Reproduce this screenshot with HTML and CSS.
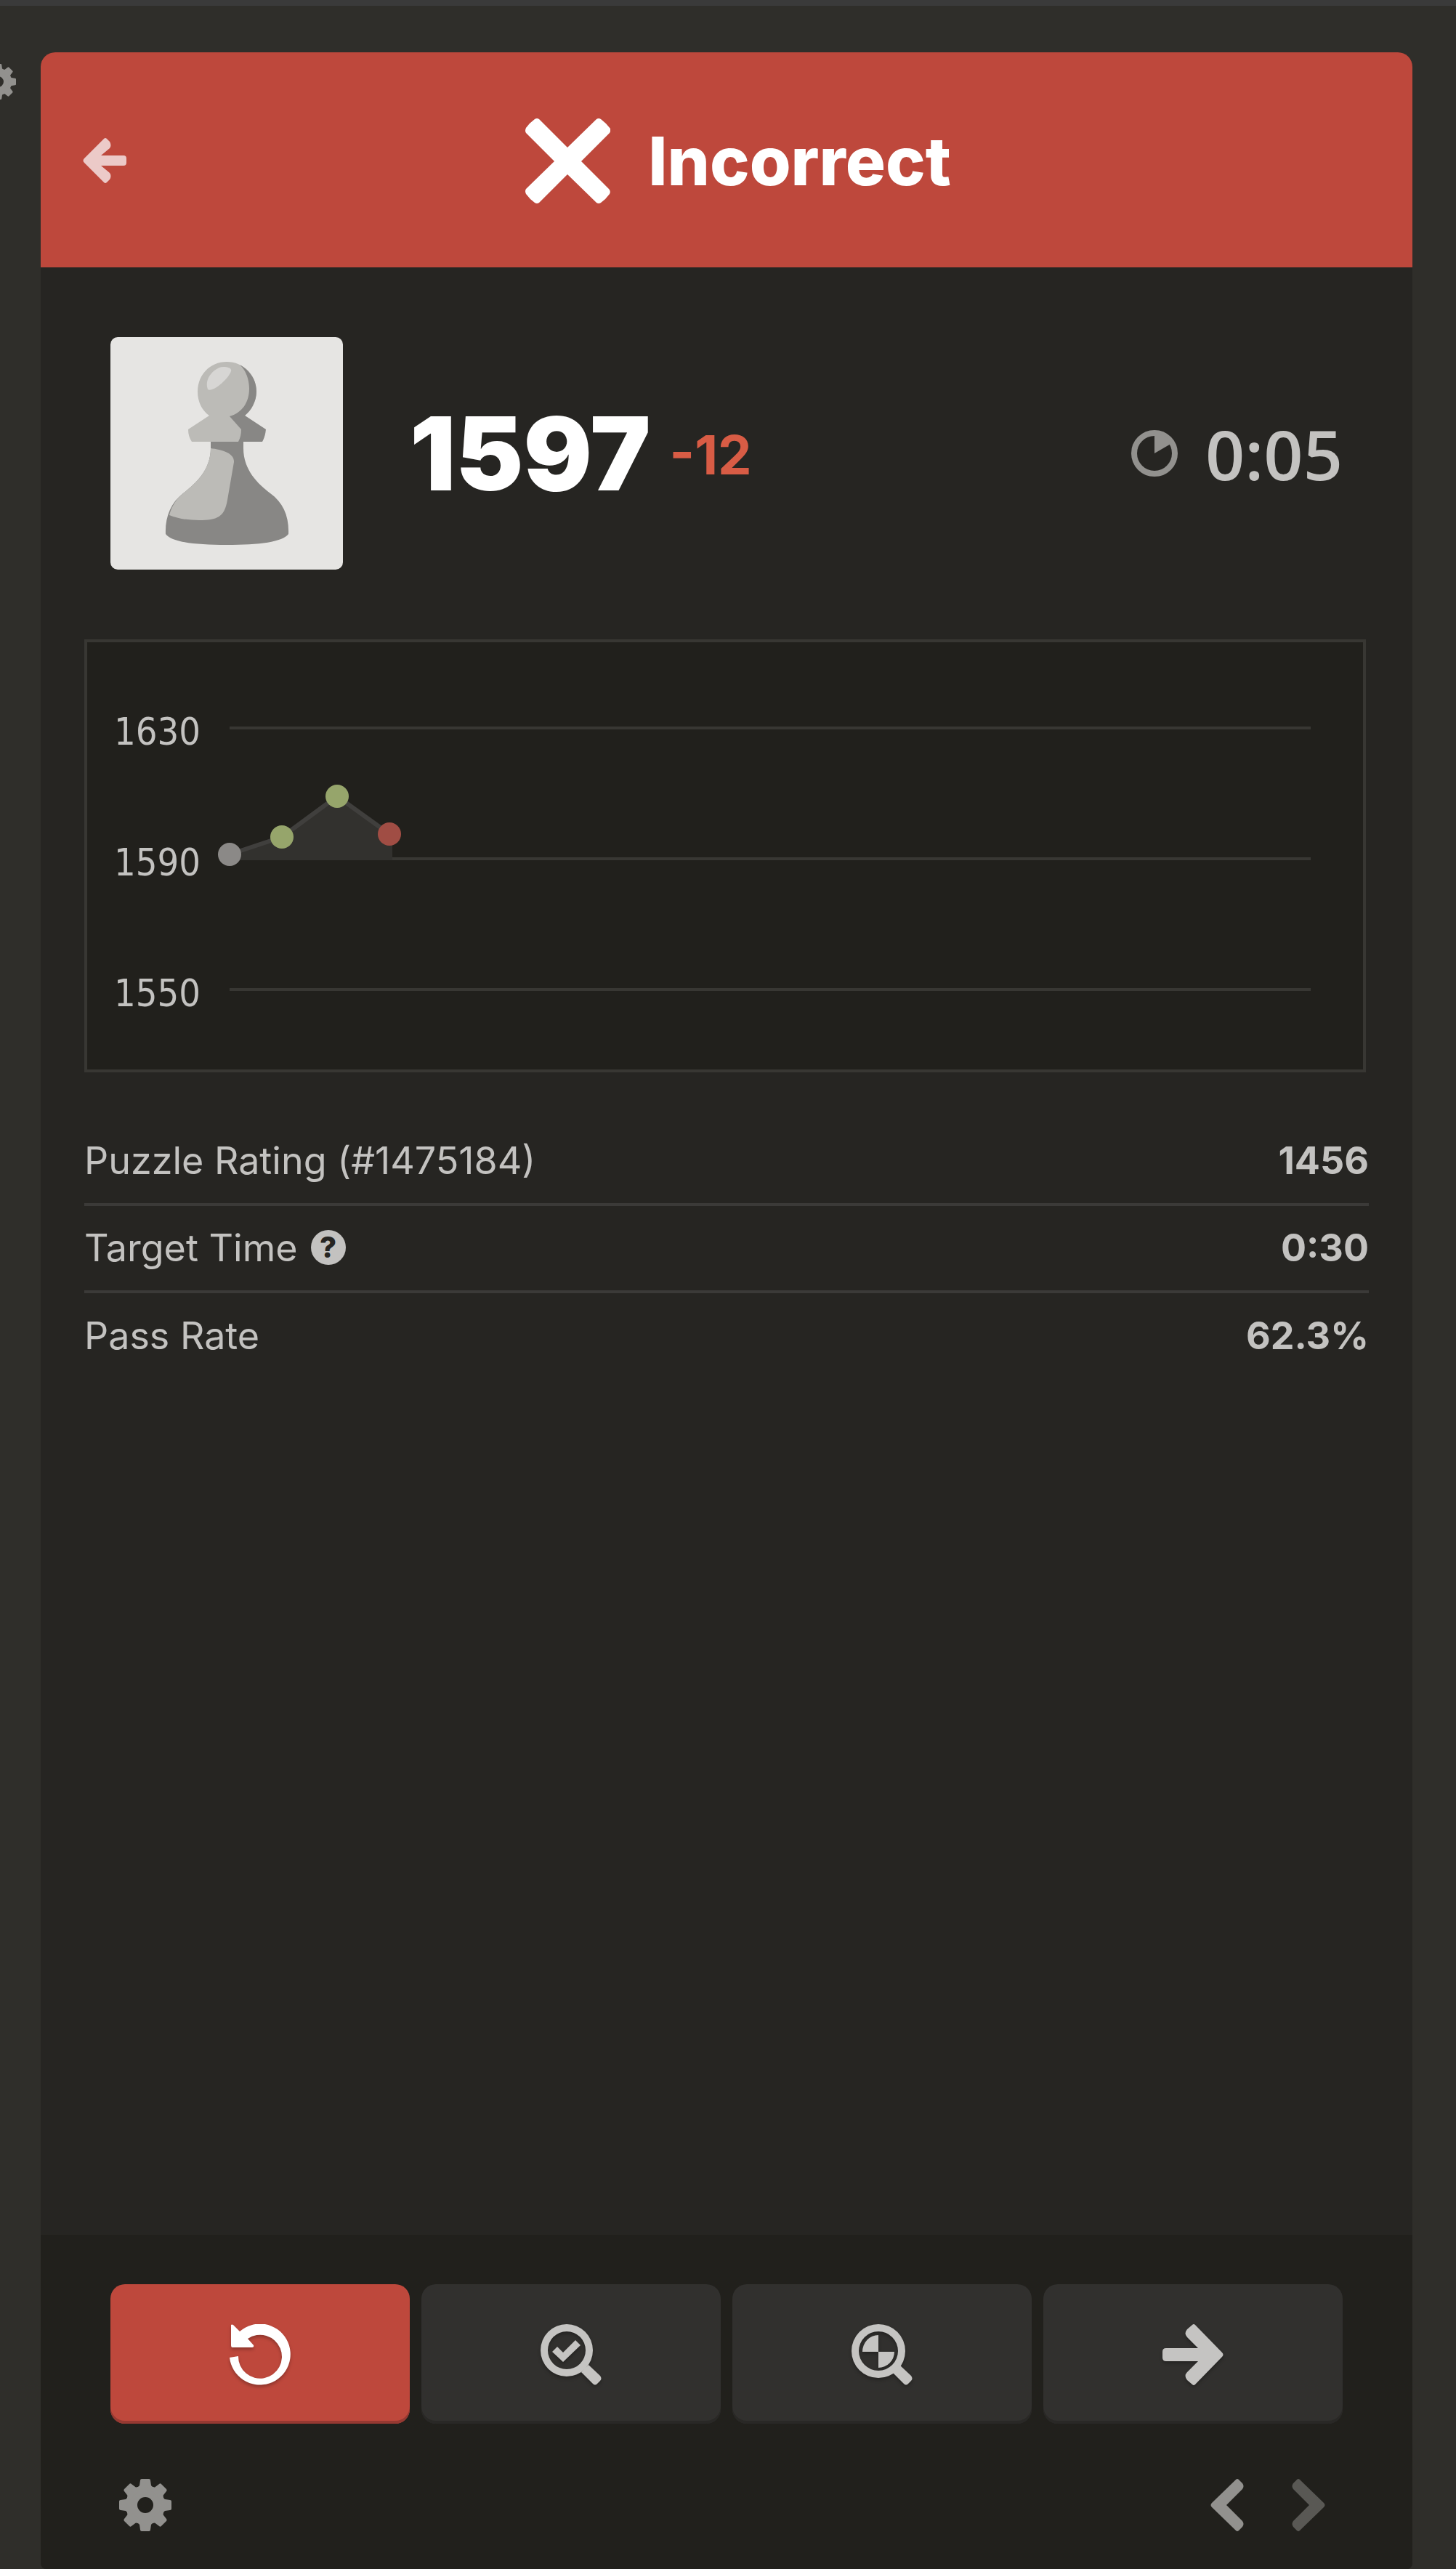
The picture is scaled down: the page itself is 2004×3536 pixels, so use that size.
FILE: index.html
```html
<!DOCTYPE html>
<html lang="en">
<head>
<meta charset="utf-8">
<meta name="viewport" content="width=device-width, initial-scale=1">
<title>Puzzles</title>
<link rel="stylesheet" href="styles.css">
</head>
<body>
<svg class="sprite" aria-hidden="true">
  <symbol id="gear" viewBox="0 0 72 72">
    <circle cx="36" cy="36" r="19" fill="none" stroke="currentColor" stroke-width="16"/>
    <g id="teeth"><path id="tooth" d="M31 0H41Q43 0 43 2L44 9Q45 11 48 12L45 16H27L24 12Q27 11 28 9L29 2Q29 0 31 0Z"/><use href="#tooth" transform="rotate(90 36 36)"/><use href="#tooth" transform="rotate(180 36 36)"/><use href="#tooth" transform="rotate(270 36 36)"/></g>
    <use href="#teeth" transform="rotate(45 36 36)"/>
  </symbol>
  <symbol id="chevron" viewBox="0 0 46 72">
    <path d="M35 1Q37 -1 39 1L44 6Q47 10 44 14L22 36L44 58Q47 62 44 66L39 71Q37 73 35 71L2 39Q-1 36 2 33Z"/>
  </symbol>
  <symbol id="arrow" viewBox="0 0 84 84">
    <path d="M41 1L34 7Q29 13 34 18L49 33H5Q0 33 0 38V46Q0 51 5 51H49L34 66Q29 71 34 77L41 83Q43 85 45 83L82 45Q85 42 82 39L45 1Q43 -1 41 1Z"/>
  </symbol>
</svg>

<div class="topline"></div>
<div class="board-settings">
  <button class="icon-button" aria-label="Board settings"><svg class="gear-small"><use href="#gear"/></svg></button>
</div>

<main class="panel">
  <header class="result">
    <button class="icon-button back" aria-label="Back">
      <svg width="60" height="62" viewBox="0 0 60 62"><path d="M29 1L2 28Q-1 31 2 34L29 61Q31 63 33 61L37 57Q40 52 37 48L25 38H56Q60 38 60 34V28Q60 24 56 24H25L37 14Q40 10 37 5L33 1Q31 -1 29 1Z"/></svg>
    </button>
    <h1 class="result-title">
      <svg width="117" height="117" viewBox="0 0 117 117"><path d="M13 1Q16 -1 19 1L58 40L98 1Q101 -1 104 1Q112 7 117 14Q118 17 116 20L77 59L115 97Q118 100 116 104Q111 111 104 116Q101 118 98 116L58 77L19 116Q16 118 13 116Q6 111 1 104Q-1 100 1 97L40 59L1 20Q-1 17 1 13Q6 6 13 1Z"/></svg>
      <span>Incorrect</span>
    </h1>
  </header>

  <section class="score">
    <svg class="avatar" viewBox="0 0 320 320" role="img" aria-label="Pawn">
      <path fill="#bcbbb7" d="M160 34C183 34 201 52 201 75C201 88 194 101 185 108L213 127Q213 137 209 144H112Q107 137 107 127L136 108C126 101 120 89 120 75C120 52 137 34 160 34Z"/>
      <path fill="#888785" d="M178 38C192 46 201 59 201 75C201 88 194 101 185 108L214 127Q213 137 209 144H176Q180 137 180 127L164 109C182 104 191 89 191 71C191 58 186 45 178 38Z"/>
      <path fill="#888785" d="M138 144H183V153C183 183 203 202 220 215C238 228 246 247 245 271C237 282 205 286 160 286C115 286 84 282 76 271C75 248 83 228 100 215C117 202 138 183 138 153Z"/>
      <path fill="#bcbbb7" d="M138 153C154 155 171 160 170 172L161 224C157 248 147 252 122 252Q98 252 81 245C84 234 90 223 100 215C117 202 138 183 138 153Z"/>
      <path fill="#d7d6d4" d="M134 72C128 56 145 41 155 41C165 41 169 44 164 51C159 60 141 76 134 72Z"/>
    </svg>
    <strong class="rating">1597</strong>
    <span class="change">-12</span>
    <div class="timer">
      <svg width="64" height="64" viewBox="0 0 64 64"><circle cx="32" cy="32" r="28" fill="none" stroke="#92918e" stroke-width="8"/><path fill="#92918e" d="M32 32V5A27 27 0 0 1 56 18Z"/></svg>
      <time>0:05</time>
    </div>
  </section>

  <section class="details">
    <svg class="chart" viewBox="0 0 1764 596" role="img" aria-label="Rating history">
      <g stroke="#383733" stroke-width="4"><path d="M200 122H1688M200 302H1688M200 482H1688"/></g>
      <g class="chart-labels"><text x="41" y="145">1630</text><text x="41" y="325">1590</text><text x="41" y="505">1550</text></g>
      <path fill="#32312e" d="M200 296L272 272L348 216L420 268L424 270V304H200Z"/>
      <path fill="none" stroke="#403f3d" stroke-width="6" d="M200 296L272 272L348 216L420 268"/>
      <circle cx="200" cy="296" r="16" fill="#8b8987"/><circle cx="272" cy="272" r="16" fill="#96a56b"/><circle cx="348" cy="216" r="16" fill="#96a56b"/><circle cx="420" cy="268" r="16" fill="#a04d44"/>
    </svg>
    <dl class="facts">
      <div class="fact"><dt>Puzzle Rating (#1475184)</dt><dd>1456</dd></div>
      <div class="fact"><dt>Target Time <button class="help" aria-label="About target time">?</button></dt><dd>0:30</dd></div>
      <div class="fact"><dt>Pass Rate</dt><dd>62.3%</dd></div>
    </dl>
  </section>

  <footer class="controls">
    <div class="actions">
      <button class="action action-retry" aria-label="Retry">
        <svg viewBox="0 0 84 84"><path d="M2 1Q3 0 5 1L14 10A42 42 0 1 1 0 46L12 44A30 30 0 1 0 25 20L33 29Q34 32 31 32H4Q2 32 2 29Z"/></svg>
      </button>
      <button class="action" aria-label="Solution">
        <svg viewBox="0 0 84 84"><path fill-rule="evenodd" d="M36 0A36 36 0 1 1 36 72A36 36 0 1 1 36 0ZM36 10A26 26 0 1 0 36 62A26 26 0 1 0 36 10Z"/><path d="M56 66L66 56L82 71Q85 75 82 78L78 82Q75 85 72 82ZM16 38L23 31L31 39L48 22L55 29L31 52Z"/></svg>
      </button>
      <button class="action" aria-label="Analysis">
        <svg viewBox="0 0 84 84"><path fill-rule="evenodd" d="M37 0A37 37 0 1 1 37 74A37 37 0 1 1 37 0ZM37 10A27 27 0 1 0 37 64A27 27 0 1 0 37 10Z"/><path d="M56 66L66 56L82 71Q85 75 82 78L78 82Q75 85 72 82ZM37 15V38H15A22 23 0 0 1 37 15ZM37 38H59A22 22 0 0 1 37 60Z"/></svg>
      </button>
      <button class="action" aria-label="Next puzzle"><svg><use href="#arrow"/></svg></button>
    </div>
    <div class="tools">
      <button class="icon-button" aria-label="Settings"><svg class="gear"><use href="#gear"/></svg></button>
      <div class="steps">
        <button class="icon-button" aria-label="Previous move"><svg class="chevron"><use href="#chevron"/></svg></button>
        <button class="icon-button" aria-label="Next move" disabled><svg class="chevron chevron-next"><use href="#chevron"/></svg></button>
      </div>
    </div>
  </footer>
</main>
</body>
</html>
```
FILE: styles.css
```css
* { box-sizing: border-box; }
body {
  margin: 0;
  min-height: 100vh;
  display: flex;
  flex-direction: column;
  position: relative;
  overflow-x: hidden;
  background: #2f2e2a;
  color: #c3c2c0;
  font-family: Inter, "Liberation Sans", sans-serif;
  font-size: 52px;
}
button { border: 0; padding: 0; font: inherit; cursor: pointer; }
svg { display: block; fill: currentColor; }
.sprite { position: absolute; width: 0; height: 0; }
.topline { height: 8px; background: #3a3a3a; }

.icon-button { display: block; background: none; color: #92918e; }
.icon-button:disabled { color: #595854; }
.board-settings { position: absolute; left: -27px; top: 88px; }
.gear-small { width: 49px; height: 49px; }

.panel {
  flex: 1;
  display: flex;
  flex-direction: column;
  margin: 64px 60px 0 56px;
  border-radius: 20px 20px 8px 8px;
  overflow: hidden;
  background: #262522;
}

.result {
  display: grid;
  grid-template-columns: 60px 1fr 60px;
  align-items: center;
  height: 296px;
  padding: 2px 58px 0;
  background: #be483c;
}
.back { color: #eccac8; }
.result-title {
  display: flex;
  align-items: center;
  justify-content: center;
  gap: 52px;
  margin: 0;
  padding-left: 32px;
  color: #fff;
  font-size: 92px;
  font-weight: 800;
}

.score { display: flex; align-items: center; padding: 96px; }
.avatar { width: 320px; height: 320px; border-radius: 10px; background: #e6e5e3; }
.rating { margin-left: 92px; color: #fff; font-size: 140px; font-weight: 900; }
.change { margin-left: 26px; padding-top: 4px; color: #d85c45; font-size: 74px; font-weight: 700; }
.timer {
  display: flex;
  align-items: center;
  gap: 38px;
  margin-left: auto;
  font-family: "Open Sans", "Noto Sans", sans-serif;
  font-size: 95px;
  font-weight: 600;
}

.details { padding: 0 60px; }
.chart { width: calc(100% - 4px); background: #21201c; outline: 4px solid #383733; outline-offset: -4px; }
.chart-labels { font: 52px "DejaVu Sans Condensed", "DejaVu Sans", sans-serif; }
.facts { margin: 64px 0 0; }
.fact {
  display: flex;
  justify-content: space-between;
  align-items: center;
  height: 120px;
  padding-bottom: 2px;
  border-bottom: 4px solid #3b3a38;
}
.fact:last-child { padding-bottom: 0; border-bottom-color: transparent; }
.fact dt { display: flex; align-items: center; gap: 18px; }
.fact dd { margin: 0; font-weight: 700; }
.help {
  width: 48px;
  height: 48px;
  border-radius: 50%;
  background: #c3c2c0;
  color: #262522;
  font-size: 40px;
  font-weight: 800;
  line-height: 48px;
}

.controls { margin-top: auto; padding: 68px 96px 52px; background: #21201c; }
.actions { display: grid; grid-template-columns: repeat(4, 1fr); gap: 16px; }
.action {
  display: grid;
  place-items: center;
  height: 192px;
  padding-top: 2px;
  border-radius: 20px;
  background: #31302e;
  color: #c5c4c2;
  box-shadow: inset 0 -4px #292826;
}
.action svg { width: 84px; height: 84px; filter: drop-shadow(0 3px 2px rgb(0 0 0 / 25%)); }
.action-retry { background: #be483c; color: #fff; box-shadow: inset 0 -4px #963932; }
.tools { display: flex; justify-content: space-between; padding: 76px 24px 0 12px; }
.gear { width: 72px; height: 72px; }
.steps { display: flex; gap: 66px; }
.chevron { width: 46px; height: 72px; }
.chevron-next { transform: scaleX(-1); }
```
